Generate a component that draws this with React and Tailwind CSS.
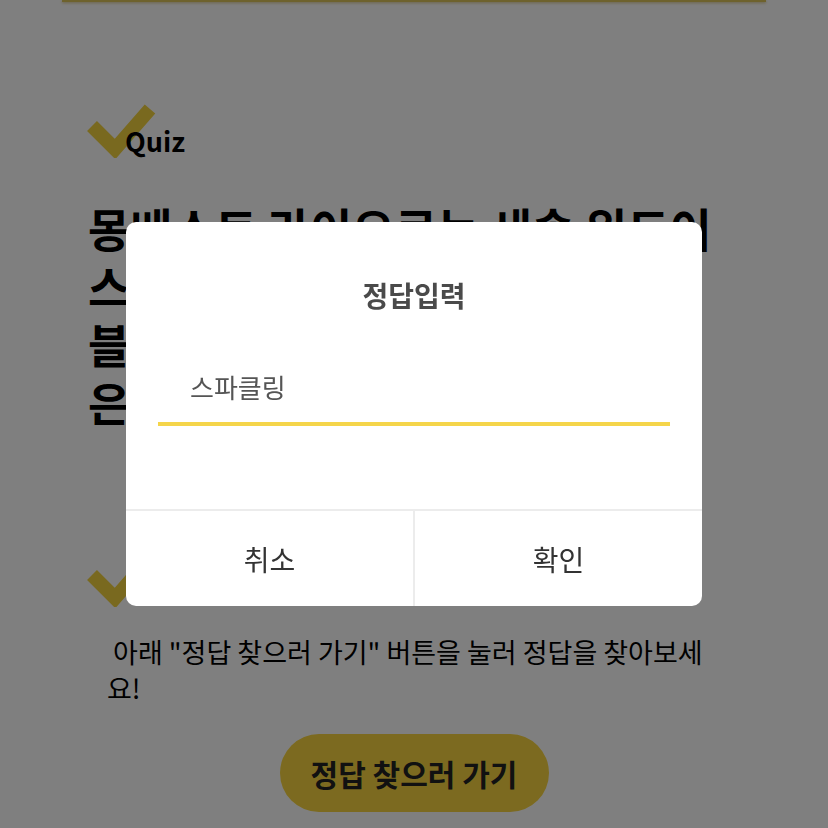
import { useState } from 'react';

function Check() {
  return (
    <svg width="70" height="55" viewBox="0 0 70 55" className="shrink-0">
      <polyline
        points="6,23 29,46 64,6"
        fill="none"
        stroke="#f3d23e"
        strokeWidth="14"
        strokeLinejoin="miter"
        strokeLinecap="butt"
      />
    </svg>
  );
}

function SectionHead({ label, shift }) {
  return (
    <div className="flex items-start pl-[86px]">
      <Check />
      <span className={`${shift} mt-[20px] text-[27px] leading-[36px] font-bold text-black`}>{label}</span>
    </div>
  );
}

export default function App() {
  const [answer, setAnswer] = useState('스파클링');

  return (
    <div className="relative min-h-[828px] bg-white font-['Noto_Sans_CJK_KR',sans-serif] text-black">
      <div className="mx-[62px] h-[2px] bg-[#dcc45a] shadow-[0_1px_3px_rgba(180,150,40,0.6)]" />

      <div className="pt-[101px]">
        <SectionHead label="Quiz" shift="-ml-[31px]" />
        <h1 className="mt-[39px] pl-[88px] text-[46px] leading-[58px] font-bold">
          몽베스트 라이오르는 새솔 위드이
          <br />
          스파클링 와인으로 만든 칵테일
          <br />
          블루 하와이와 어울리는 음료
          <br />
          은 무엇일까요?
        </h1>
      </div>

      <div className="mt-[122px]">
        <SectionHead label="Hint" shift="-ml-[28px]" />
        <p className="ml-[107px] mt-[26px] w-[606px] text-[27px] leading-[36px]">
          {'\u00A0'}아래 "정답 찾으러 가기" 버튼을 눌러 정답을 찾아보세요!
        </p>
        <div className="mt-[28px] flex justify-center pb-[40px]">
          <button className="h-[78px] w-[269px] rounded-full bg-[#f8d540] text-[30px] font-bold text-[#222]">
            정답 찾으러 가기
          </button>
        </div>
      </div>

      <div className="fixed inset-0 flex items-center justify-center bg-black/50">
        <div className="w-[576px] overflow-hidden rounded-[10px] bg-white">
          <div className="pt-[55px] text-center text-[28px] leading-[36px] font-bold text-[#4a4a4a]">정답입력</div>
          <div className="mx-[32px] mt-[37px] border-b-4 border-[#f5d54a]">
            <input
              value={answer}
              onChange={(e) => setAnswer(e.target.value)}
              className="h-[72px] w-full bg-transparent pl-[32px] text-[26px] text-[#555] outline-none"
            />
          </div>
          <div className="mt-[83px] flex h-[97px] border-t-2 border-[#ececec]">
            <button className="flex-1 text-[28px] text-[#333]">취소</button>
            <div className="w-[2px] bg-[#ececec]" />
            <button className="flex-1 text-[28px] text-[#333]">확인</button>
          </div>
        </div>
      </div>
    </div>
  );
}
